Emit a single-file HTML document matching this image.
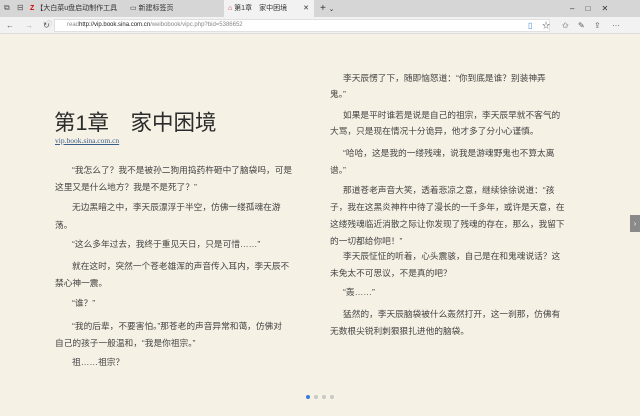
<!DOCTYPE html>
<html><head><meta charset="utf-8"><style>
*{margin:0;padding:0;box-sizing:border-box}
body{width:640px;height:416px;overflow:hidden;background:#f6f1e5;font-family:"Liberation Sans","Noto Sans CJK SC",sans-serif;position:relative}
.tabs{position:absolute;left:0;top:0;width:640px;height:17px;background:#d6d6d6}
.tab{position:absolute;top:0;height:17px;font-size:7px;color:#333;line-height:17px;white-space:nowrap}
.active{background:#f2f2f2}
.addr{position:absolute;left:0;top:17px;width:640px;height:17px;background:#f2f2f2;border-bottom:1px solid #ddd}
.url{position:absolute;left:54px;top:2px;width:496px;height:13px;background:#fff;border:1px solid #e0e0e0;font-size:6px;line-height:11px;color:#888;padding-left:12px}
.ic{position:absolute;font-size:8px;color:#555;line-height:17px}
.l{position:absolute;font-size:8.7px;color:#444;white-space:nowrap;line-height:12px}
h1{position:absolute;left:54px;top:106px;font-size:21.5px;font-weight:normal;color:#2b2b2b;white-space:nowrap;letter-spacing:0}
.link{position:absolute;left:55px;top:136px;font-size:7.5px;color:#3a5c8a;text-decoration:underline;font-family:"Liberation Serif",serif}
.dot{position:absolute;top:395px;width:4px;height:4px;border-radius:50%;background:#c8c8c8}
</style></head><body>
<div class="tabs">
<div class="ic" style="left:4px;top:-1px">⧉</div><div class="ic" style="left:17px;top:-1px">⊟</div>
<div class="tab" style="left:30px"><span style="color:#c00;font-weight:bold">Z</span> 【大白菜u盘启动制作工具</div>
<div class="tab" style="left:130px">▭ 新建标签页</div>
<div class="tab active" style="left:224px;width:90px;padding-left:4px"><span style="color:#c33">⌂</span> 第1章　家中困境 <span style="float:right;margin-right:5px">✕</span></div>
<div class="tab" style="left:320px;font-size:10px">+ <span style="font-size:7px">⌄</span></div>
<div class="tab" style="left:570px;font-size:8px">–&nbsp;&nbsp;&nbsp;&nbsp;&nbsp;□&nbsp;&nbsp;&nbsp;&nbsp;&nbsp;✕</div>
</div>
<div class="addr">
<div class="ic" style="left:6px">←</div><div class="ic" style="left:25px;color:#aaa">→</div><div class="ic" style="left:43px">↻</div>
<div class="url">read<span style="color:#222">http://vip.book.sina.com.cn</span>/weibobook/vipc.php?bid=5386652<span style="position:absolute;left:-9px;color:#999">ⓘ</span></div>
<div class="ic" style="left:528px;color:#4a8ad4">▯</div><div class="ic" style="left:542px">☆</div>
<div class="ic" style="left:562px">✩</div><div class="ic" style="left:578px">✎</div><div class="ic" style="left:594px">⇪</div><div class="ic" style="left:612px">···</div>
</div>
<h1>第1章　家中困境</h1>
<div class="link">vip.book.sina.com.cn</div>

<div class="l" style="left:72px;top:164px">“我怎么了？我不是被孙二狗用捣药杵砸中了脑袋吗，可是</div>
<div class="l" style="left:55px;top:181px">这里又是什么地方？我是不是死了？”</div>
<div class="l" style="left:72px;top:201px">无边黑暗之中，李天辰漂浮于半空，仿佛一缕孤魂在游</div>
<div class="l" style="left:55px;top:219px">荡。</div>
<div class="l" style="left:72px;top:238px">“这么多年过去，我终于重见天日，只是可惜……”</div>
<div class="l" style="left:72px;top:260px">就在这时，突然一个苍老雄浑的声音传入耳内，李天辰不</div>
<div class="l" style="left:55px;top:277px">禁心神一震。</div>
<div class="l" style="left:72px;top:297px">“谁？”</div>
<div class="l" style="left:72px;top:320px">“我的后辈，不要害怕。”那苍老的声音异常和蔼，仿佛对</div>
<div class="l" style="left:55px;top:337px">自己的孩子一般温和，“我是你祖宗。”</div>
<div class="l" style="left:72px;top:356px">祖……祖宗？</div>

<div class="l" style="left:343px;top:72px">李天辰愣了下，随即恼怒道：“你到底是谁？别装神弄</div>
<div class="l" style="left:330px;top:88px">鬼。”</div>
<div class="l" style="left:343px;top:109px">如果是平时谁若是说是自己的祖宗，李天辰早就不客气的</div>
<div class="l" style="left:330px;top:125px">大骂，只是现在情况十分诡异，他才多了分小心谨慎。</div>
<div class="l" style="left:343px;top:147px">“哈哈，这是我的一缕残魂，说我是游魂野鬼也不算太离</div>
<div class="l" style="left:330px;top:164px">谱。”</div>
<div class="l" style="left:343px;top:184px">那道苍老声音大笑，透着悲凉之意，继续徐徐说道：“孩</div>
<div class="l" style="left:330px;top:201px">子，我在这黑炎神杵中待了漫长的一千多年，或许是天意，在</div>
<div class="l" style="left:330px;top:218px">这缕残魂临近消散之际让你发现了残魂的存在，那么，我留下</div>
<div class="l" style="left:330px;top:235px">的一切都给你吧！”</div>
<div class="l" style="left:343px;top:250px">李天辰怔怔的听着，心头震骇，自己是在和鬼魂说话？这</div>
<div class="l" style="left:330px;top:267px">未免太不可思议，不是真的吧？</div>
<div class="l" style="left:343px;top:286px">“轰……”</div>
<div class="l" style="left:343px;top:308px">猛然的，李天辰脑袋被什么轰然打开，这一刹那，仿佛有</div>
<div class="l" style="left:330px;top:325px">无数根尖锐利刺狠狠扎进他的脑袋。</div>

<div style="position:absolute;left:630px;top:215px;width:10px;height:17px;background:#8a8a8a;color:#eee;font-size:8px;line-height:17px;text-align:center">›</div>
<div class="dot" style="left:306px;background:#3a7bd5"></div>
<div class="dot" style="left:314px"></div>
<div class="dot" style="left:322px"></div>
<div class="dot" style="left:330px"></div>
</body></html>
